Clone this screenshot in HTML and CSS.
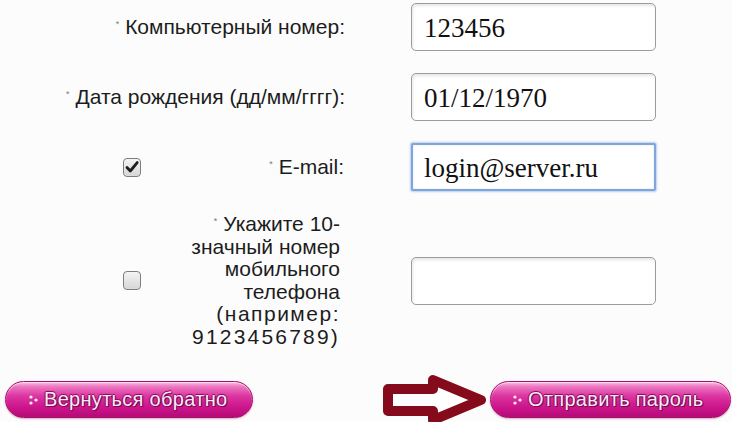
FILE: index.html
```html
<!DOCTYPE html>
<html lang="ru">
<head>
<meta charset="utf-8">
<title>Восстановление пароля</title>
<link rel="stylesheet" href="styles.css">
</head>
<body>
<div class="page">
  <div class="form">
    <label class="lbl wide"><span class="req"></span>Компьютерный номер:</label>
    <div class="field"><input class="inp" type="text" value="123456"></div>

    <label class="lbl wide"><span class="req"></span>Дата рождения (дд/мм/гггг):</label>
    <div class="field"><input class="inp" type="text" value="01/12/1970"></div>

    <div class="cbcell"><span class="cb checked"><svg viewBox="0 0 18 18" width="18" height="18"><path d="M4 9.5 L7.3 13 L14.2 4.6" fill="none" stroke="#1e1e1e" stroke-width="2.8" stroke-linecap="round" stroke-linejoin="round"/></svg></span></div>
    <label class="lbl"><span class="req"></span>E-mail:</label>
    <div class="field"><input class="inp focus" type="text" value="login@server.ru"></div>

    <div class="cbcell"><span class="cb"></span></div>
    <label class="lbl multi"><span class="req"></span>Укажите 10-значный номер мобильного телефона <span class="wideish">(например:</span> <span class="digits">9123456789)</span></label>
    <div class="field"><input class="inp" type="text" value=""></div>
  </div>

  <div class="actions">
    <a class="btn back" href="#"><svg class="dots" viewBox="0 0 9 10" width="9" height="10"><circle cx="2" cy="2" r="1.6"/><circle cx="2" cy="8" r="1.6"/><circle cx="7" cy="5" r="1.6"/></svg>Вернуться обратно</a>
    <span class="spacer"></span>
    <svg class="arrow" viewBox="0 0 108 50" width="108" height="50"><path d="M8 14 L53 14 L53 5 L101 25 L53 45 L53 36 L8 36 Z" fill="#fff" stroke="#850a1b" stroke-width="10" stroke-linejoin="round"/></svg>
    <a class="btn send" href="#"><svg class="dots" viewBox="0 0 9 10" width="9" height="10"><circle cx="2" cy="2" r="1.6"/><circle cx="2" cy="8" r="1.6"/><circle cx="7" cy="5" r="1.6"/></svg>Отправить пароль</a>
  </div>
</div>
</body>
</html>
```

FILE: styles.css
```css
html, body {
  margin: 0;
  padding: 0;
  background: #fcfcfc;
}

.page {
  width: 732px;
  height: 422px;
  overflow: hidden;
  font-family: "Liberation Sans", Arial, sans-serif;
  color: #1c1c1c;
}

.form {
  display: grid;
  grid-template-columns: 185px 165px 1fr;
  row-gap: 22px;
  padding-top: 3px;
  align-items: center;
}

.lbl {
  grid-column: 2;
  font-size: 21px;
  line-height: 22.6px;
  text-align: right;
  padding-right: 6px;
}

.lbl.wide {
  grid-column: 1 / 3;
  padding-right: 5px;
}

.lbl.multi {
  padding-left: 4px;
  padding-right: 10px;
}

.req::before {
  content: "*";
}

.req {
  position: relative;
  top: -7px;
  font-size: 9px;
  line-height: 0;
  vertical-align: baseline;
  color: #7a7a7a;
  margin-right: 6px;
}

.wideish {
  letter-spacing: 1.5px;
}

.digits {
  letter-spacing: 2.2px;
}

.field {
  grid-column: 3;
  padding-left: 61px;
}

.inp {
  display: block;
  box-sizing: border-box;
  width: 245px;
  height: 48px;
  margin: 0;
  padding: 2px 0 0 12px;
  border: 1px solid #9c9c9c;
  border-radius: 5px;
  background: #ffffff;
  box-shadow: inset 1px 2px 3px rgba(0, 0, 0, 0.10);
  font-family: "Liberation Serif", "Times New Roman", serif;
  font-size: 27px;
  color: #111;
  outline: none;
}

.inp.focus {
  border: 2px solid #7fa6d8;
  border-radius: 2px;
  padding-left: 11px;
  box-shadow: 0 0 2px 1px #b9cff0, inset 0 0 2px rgba(120, 160, 220, 0.35);
}

.cbcell {
  grid-column: 1;
  display: flex;
  justify-content: flex-end;
  padding-right: 44px;
}

.cb {
  display: block;
  box-sizing: border-box;
  width: 18px;
  height: 19px;
  border: 1px solid #7d7d7d;
  border-radius: 4px;
  background: linear-gradient(#f4f4f4, #d6d6d6);
  box-shadow: inset 0 0 1px #fff;
}

.cb svg {
  display: block;
  margin: -1px 0 0 -1px;
}

.actions {
  display: flex;
  align-items: center;
  height: 48px;
  margin-top: 27px;
  padding-left: 5px;
}

.spacer {
  flex: 1;
}

.btn {
  display: flex;
  align-items: center;
  box-sizing: border-box;
  height: 37px;
  border-radius: 19px;
  border: 1px solid #a8106c;
  background: linear-gradient(#f8bde2 0%, #ec74c0 14%, #dc35a1 40%, #cd168c 70%, #b50a77 100%);
  box-shadow: inset 0 1px 1px rgba(255, 255, 255, 0.6), 0 1px 2px rgba(120, 0, 70, 0.3);
  color: #fdeaf7;
  text-decoration: none;
  font-family: "Liberation Sans", Arial, sans-serif;
  font-size: 20px;
  letter-spacing: 0.3px;
  text-shadow: 0 0 2px #6e0046, 1px 1px 0 #850856, -1px 0 0 #9c0f6a, 0 -1px 0 #9c0f6a;
}

.btn .dots {
  fill: #fff2fb;
  margin-right: 6px;
}

.back {
  width: 248px;
  padding-left: 23px;
}

.send {
  width: 241px;
  padding-left: 22px;
  margin-right: 1px;
}

.arrow {
  display: block;
  margin-right: 2px;
}
```
